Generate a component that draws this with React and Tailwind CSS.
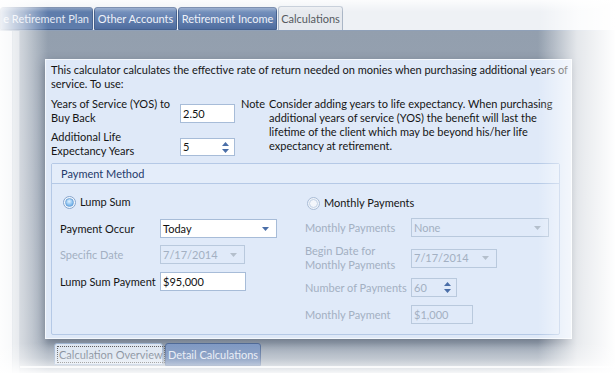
import React from "react";

const Arrow = ({ disabled }) => (
  <svg width="7" height="4" viewBox="0 0 7 4" className="shrink-0">
    <path d="M0 0 H7 L3.5 4 Z" fill={disabled ? "#b4bfcc" : "#4a6ea8"} />
  </svg>
);

const SpinArrows = () => (
  <div className="flex flex-col items-center gap-[3px]">
    <svg width="7" height="4" viewBox="0 0 7 4">
      <path d="M0 4 H7 L3.5 0 Z" fill="#4a6ea8" />
    </svg>
    <svg width="7" height="4" viewBox="0 0 7 4">
      <path d="M0 0 H7 L3.5 4 Z" fill="#4a6ea8" />
    </svg>
  </div>
);

const Radio = ({ checked }) => (
  <span
    className={
      checked
        ? "w-[13px] h-[13px] rounded-full border border-[#86a4cc] bg-[#f4f8fd] flex items-center justify-center"
        : "w-[13px] h-[13px] rounded-full border border-[#a9bcd6] bg-[#eef3fa] flex items-center justify-center"
    }
  >
    {checked ? (
      <span className="w-[9px] h-[9px] rounded-full bg-[radial-gradient(circle_at_45%_35%,#e2f2ff,#6cb0ea_75%)] border border-[#73a6da]" />
    ) : (
      <span className="w-[9px] h-[9px] rounded-full border border-[#c3d2e6] bg-[#f3f6fb]" />
    )}
  </span>
);

const Combo = ({ value, width, disabled }) => (
  <div
    className={`h-[19px] ${width} flex items-center justify-between pl-[2px] pr-[7px] border ${
      disabled ? "border-[#b9c9dd] text-[#a3b0c2] bg-transparent" : "border-[#a7bcd8] bg-white text-[#111]"
    }`}
  >
    <span>{value}</span>
    <Arrow disabled={disabled} />
  </div>
);

const Field = ({ value, width, disabled }) => (
  <div
    className={`h-[19px] ${width} flex items-center pl-[2px] border ${
      disabled ? "border-[#b9c9dd] text-[#a3b0c2]" : "border-[#a7bcd8] bg-white text-[#111]"
    }`}
  >
    {value}
  </div>
);

export default function App() {
  return (
    <div className="relative w-[616px] h-[373px] overflow-hidden bg-white text-[11px] leading-[14px] font-['Lato',sans-serif] text-[#151515]">
      {/* tab strip */}
      <div className="h-[31px] flex items-end bg-[#eef1f5] border-b border-[#8fa0b8]">
        <div className="h-[23px] w-[93px] flex items-center justify-end pr-[3px] bg-[#5e7cab] text-[#e4eaf4] border border-[#4b6590] rounded-t-[3px] whitespace-nowrap overflow-hidden">
          e Retirement Plan
        </div>
        <div className="ml-[1px] h-[23px] w-[83px] flex items-center justify-center bg-linear-to-b from-[#7c97c2] to-[#4f6d9f] text-[#eef2f9] border border-[#46618e] rounded-t-[3px]">
          Other Accounts
        </div>
        <div className="ml-[1px] h-[23px] w-[99px] flex items-center justify-center bg-linear-to-b from-[#7c97c2] to-[#4f6d9f] text-[#eef2f9] border border-[#46618e] rounded-t-[3px]">
          Retirement Income
        </div>
        <div className="ml-[1px] h-[24px] w-[65px] flex items-center justify-center bg-[#e6e9ee] text-[#55595f] border border-b-0 border-[#aab6c6] rounded-t-[3px]">
          Calculations
        </div>
      </div>

      {/* window body */}
      <div className="h-[342px] flex bg-[#9aa5b4]">
        <div className="w-[13px] bg-[#e9ecf0] border-r border-[#b7c0cc]" />
        <div className="w-[7px] bg-[#c6cdd6] border-r border-[#a8b2c0]" />
        <div className="flex-1 flex flex-col bg-linear-to-b from-[#939fae] via-[#9aa5b4] to-[#a4aebb]">
          {/* popup */}
          <div className="ml-[25px] mt-[28px] w-[527px] h-[280px] bg-[#dfe9f8] border border-[#f4f8fd] shadow-[0_4px_10px_rgba(40,50,70,0.45)] px-[5px] pt-[3px]">
            <p className="w-[518px]">
              This calculator calculates the effective rate of return needed on monies when purchasing additional years of service. To use:
            </p>
            <div className="flex mt-[6px]">
              <div className="w-[190px] flex flex-col">
                <div className="flex items-start">
                  <div className="w-[129px]">
                    Years of Service (YOS) to
                    <br />
                    Buy Back
                  </div>
                  <div className="mt-[7px]">
                    <Field value="2.50" width="w-[55px]" />
                  </div>
                </div>
                <div className="flex items-start mt-[5px]">
                  <div className="w-[129px]">
                    Additional Life
                    <br />
                    Expectancy Years
                  </div>
                  <div className="mt-[8px] h-[18px] w-[55px] flex items-center justify-between pl-[2px] pr-[5px] border border-[#a7bcd8] bg-white">
                    <span>5</span>
                    <SpinArrows />
                  </div>
                </div>
              </div>
              <div className="w-[28px]">Note</div>
              <p className="w-[292px]">
                Consider adding years to life expectancy. When purchasing additional years of service (YOS) the benefit will last the lifetime of the client which may be beyond his/her life expectancy at retirement.
              </p>
            </div>

            {/* payment method group */}
            <div className="mt-[5px] w-[509px] h-[172px] border border-[#b5c9e6] rounded-[2px] bg-[#e0eaf9]">
              <div className="h-[20px] flex items-center pl-[9px] text-[#1f3a6a] border-b border-[#b5c9e6] bg-[#e4edfa]">
                Payment Method
              </div>
              <div className="flex pt-[11px]">
                <div className="w-[253px] pl-[8px] flex flex-col">
                  <div className="flex items-center gap-[4px] h-[14px] ml-[3px]">
                    <Radio checked />
                    <span>Lump Sum</span>
                  </div>
                  <div className="flex items-center mt-[10px]">
                    <span className="w-[100px]">Payment Occur</span>
                    <Combo value="Today" width="w-[117px]" />
                  </div>
                  <div className="flex items-center mt-[7px]">
                    <span className="w-[100px] text-[#a3b0c2]">Specific Date</span>
                    <Combo value="7/17/2014" width="w-[85px]" disabled />
                  </div>
                  <div className="flex items-center mt-[8px]">
                    <span className="w-[100px] whitespace-nowrap">Lump Sum Payment</span>
                    <Field value="$95,000" width="w-[86px]" />
                  </div>
                </div>
                <div className="flex-1 flex flex-col text-[#a3b0c2]">
                  <div className="flex items-center gap-[4px] h-[14px] ml-[2px] mt-[1px] text-[#151515]">
                    <Radio />
                    <span>Monthly Payments</span>
                  </div>
                  <div className="flex items-center mt-[8px]">
                    <span className="w-[106px]">Monthly Payments</span>
                    <Combo value="None" width="w-[138px]" disabled />
                  </div>
                  <div className="flex items-center mt-[7px]">
                    <span className="w-[106px]">
                      Begin Date for
                      <br />
                      Monthly Payments
                    </span>
                    <Combo value="7/17/2014" width="w-[86px]" disabled />
                  </div>
                  <div className="flex items-center mt-[6px]">
                    <span className="w-[106px] whitespace-nowrap">Number of Payments</span>
                    <div className="h-[19px] w-[46px] flex items-center justify-between pl-[2px] pr-[5px] border border-[#b9c9dd]">
                      <span>60</span>
                      <SpinArrows />
                    </div>
                  </div>
                  <div className="flex items-center mt-[8px]">
                    <span className="w-[106px]">Monthly Payment</span>
                    <Field value="$1,000" width="w-[62px]" disabled />
                  </div>
                </div>
              </div>
            </div>
          </div>

          {/* bottom tabs */}
          <div className="flex ml-[34px] mt-[4px] items-start">
            <div className="h-[22px] w-[109px] px-[2px] flex items-center bg-[#dbe4f0] border border-[#9db2cf] rounded-t-[3px] text-[#6f7a8a]">
              <span className="border border-dotted border-[#555] px-[1px] leading-[15px] whitespace-nowrap">Calculation Overview</span>
            </div>
            <div className="ml-[2px] h-[23px] w-[96px] flex items-center justify-center bg-linear-to-b from-[#7d97c3] to-[#5a77a8] border border-[#4e6895] rounded-t-[3px] text-[#e3e9f3]">
              Detail Calculations
            </div>
          </div>
          <div className="h-[2px] bg-[#f0f2f5]" />
        </div>
      </div>

      {/* vignette */}
      <div className="absolute right-0 top-0 h-full w-[78px] bg-linear-to-l from-white via-white/75 to-transparent pointer-events-none" />
      <div className="absolute left-0 top-0 h-full w-[48px] bg-linear-to-r from-white/90 via-white/50 to-transparent pointer-events-none" />
      <div className="absolute left-0 bottom-0 w-full h-[30px] bg-linear-to-t from-white/90 via-white/30 to-transparent pointer-events-none" />
      <div className="absolute left-0 top-0 w-full h-[12px] bg-linear-to-b from-white/80 to-transparent pointer-events-none" />
    </div>
  );
}
